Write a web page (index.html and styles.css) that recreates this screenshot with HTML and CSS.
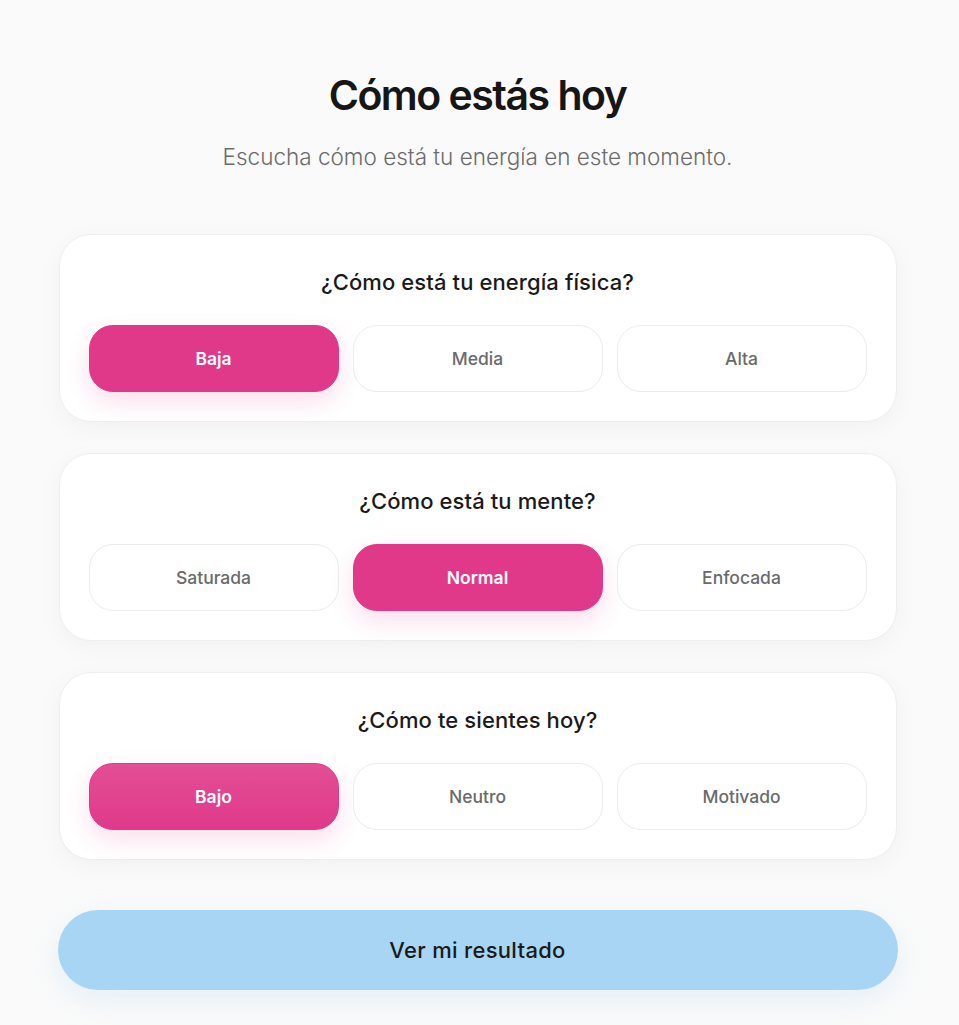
FILE: index.html
```html
<!DOCTYPE html>
<html lang="es">
<head>
<meta charset="utf-8">
<title>Cómo estás hoy</title>
<link rel="stylesheet" href="styles.css">
</head>
<body>
<main class="page">
  <h1 class="title">Cómo estás hoy</h1>
  <p class="subtitle">Escucha cómo está tu energía en este momento.</p>

  <section class="card">
    <h2 class="question">¿Cómo está tu energía física?</h2>
    <div class="options">
      <button class="opt selected">Baja</button>
      <button class="opt">Media</button>
      <button class="opt">Alta</button>
    </div>
  </section>

  <section class="card">
    <h2 class="question">¿Cómo está tu mente?</h2>
    <div class="options">
      <button class="opt">Saturada</button>
      <button class="opt selected">Normal</button>
      <button class="opt">Enfocada</button>
    </div>
  </section>

  <section class="card">
    <h2 class="question">¿Cómo te sientes hoy?</h2>
    <div class="options">
      <button class="opt selected hover">Bajo</button>
      <button class="opt">Neutro</button>
      <button class="opt">Motivado</button>
    </div>
  </section>

  <button class="result">Ver mi resultado</button>
</main>
</body>
</html>
```

FILE: styles.css
```css
* { box-sizing: border-box; }
html, body { margin: 0; padding: 0; }
body {
  background: #fafafa;
  font-family: Inter, "Noto Sans", sans-serif;
  color: #1a1a1a;
}
.page {
  width: 840px;
  margin: 0 auto;
  padding: 70px 0 40px;
  display: flex;
  flex-direction: column;
  align-items: stretch;
  position: relative;
  left: -2px;
}
.title {
  margin: 0;
  text-align: center;
  font-size: 41px;
  line-height: 50px;
  font-weight: 600;
  letter-spacing: -1.5px;
  color: #161616;
}
.subtitle {
  margin: 22px 0 0;
  text-align: center;
  font-size: 22.5px;
  line-height: 30px;
  font-weight: 300;
  color: #6b6b6b;
}
.card {
  margin: 62px 1px 0;
  background: #fff;
  border: 1px solid #eeeeee;
  border-radius: 32px;
  padding: 33px 29px 29px;
  box-shadow: 0 6px 24px rgba(0,0,0,0.04);
}
.card + .card { margin-top: 31px; }
.question {
  margin: 0 0 29px;
  text-align: center;
  font-size: 22px;
  line-height: 28px;
  font-weight: 500;
  letter-spacing: 0.1px;
  color: #1a1a1a;
}
.options {
  display: grid;
  grid-template-columns: repeat(3, 1fr);
  gap: 14px;
}
.opt {
  height: 67px;
  border-radius: 24px;
  border: 1px solid #ececec;
  background: #fff;
  font-family: Inter, "Noto Sans", sans-serif;
  font-size: 17.5px;
  font-weight: 500;
  color: #6a6a6a;
  cursor: pointer;
}
.opt.selected {
  background: #e0398a;
  border-color: #e0398a;
  color: #fff;
  font-weight: 600;
  box-shadow: 0 10px 24px rgba(224,57,138,0.16);
}
.opt.selected.hover {
  background: linear-gradient(180deg, #e34e95 0%, #e0398a 100%);
}
.result {
  margin-top: 50px;
  height: 80px;
  border: none;
  border-radius: 40px;
  background: #a8d5f4;
  font-family: Inter, "Noto Sans", sans-serif;
  font-size: 22px;
  font-weight: 500;
  letter-spacing: 0.3px;
  color: #1a1a1a;
  box-shadow: 0 10px 30px rgba(168,213,244,0.25);
  cursor: pointer;
}
```
